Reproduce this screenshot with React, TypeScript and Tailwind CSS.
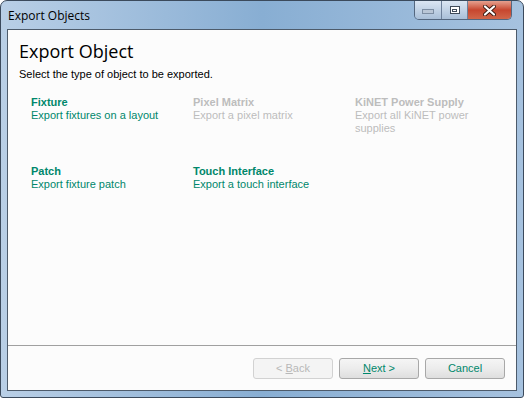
import React from 'react';

const ui = { fontFamily: '"Liberation Sans", Arial, sans-serif' };
const title = { fontFamily: '"Open Sans", "Noto Sans", sans-serif' };

type Item = { name: string; desc: string; enabled: boolean };

const items: Item[] = [
    { name: 'Fixture', desc: 'Export fixtures on a layout', enabled: true },
    { name: 'Pixel Matrix', desc: 'Export a pixel matrix', enabled: false },
    { name: 'KiNET Power Supply', desc: 'Export all KiNET power supplies', enabled: false },
    { name: 'Patch', desc: 'Export fixture patch', enabled: true },
    { name: 'Touch Interface', desc: 'Export a touch interface', enabled: true },
];

function ObjectLink({ item }: { item: Item }) {
    const color = item.enabled ? 'text-[#00876b]' : 'text-[#bdbdbd]';
    return (
        <div className={`text-[11px] leading-[13px] ${color}`}>
            <div className="font-bold">{item.name}</div>
            <div className="w-[130px]">{item.desc}</div>
        </div>
    );
}

function WizardButton({ children, disabled }: { children: React.ReactNode; disabled?: boolean }) {
    return (
        <button
            className={`h-[21px] w-[80px] rounded-[3px] border text-[11px] ${
                disabled
                    ? 'border-[#d2d2d2] bg-[#f4f4f4] text-[#b8b8b8]'
                    : 'border-[#a8a8a8] bg-gradient-to-b from-[#f5f5f5] via-[#ececec] to-[#dedede] text-[#00876b]'
            }`}
        >
            {children}
        </button>
    );
}

export default function App() {
    return (
        <div className="h-[398px] w-[524px] bg-white" style={ui}>
            <div className="flex h-full w-full flex-col rounded-t-[7px] rounded-b-[3px] border border-[#3b4a5c] bg-gradient-to-r from-[#b9cfe6] via-[#88aed3] to-[#a6c2df]">
                {/* title bar */}
                <div className="flex h-[28px] items-start">
                    <div className="pl-[7px] pt-[6px] text-[12px] text-black" style={title}>
                        Export Objects
                    </div>
                    <div className="ml-auto mr-[11px] flex h-[19px] overflow-hidden rounded-b-[5px] border border-t-0 border-[#54677f]">
                        <div className="flex w-[27px] items-center justify-center border-r border-[#6d809a] bg-gradient-to-b from-[#dbe6f3] to-[#a9bfd8]">
                            <div className="mt-[3px] h-[3px] w-[10px] bg-[#b9c6d6] ring-1 ring-[#7d8ea3]" />
                        </div>
                        <div className="flex w-[26px] items-center justify-center border-r border-[#6d809a] bg-gradient-to-b from-[#dbe6f3] to-[#a9bfd8]">
                            <div className="flex h-[8px] w-[10px] items-center justify-center border border-[#3f4b5a] bg-white">
                                <div className="h-[3px] w-[5px] border border-[#3f4b5a]" />
                            </div>
                        </div>
                        <div className="flex w-[43px] items-center justify-center bg-gradient-to-b from-[#e5a08f] via-[#c7462f] to-[#d1664a]">
                            <svg width="13" height="11" viewBox="0 0 13 11">
                                <path d="M2 1.5 L11 9.5 M11 1.5 L2 9.5" stroke="#3c1b14" strokeWidth="4" strokeLinecap="round" />
                                <path d="M2 1.5 L11 9.5 M11 1.5 L2 9.5" stroke="#ffffff" strokeWidth="2.2" strokeLinecap="round" />
                            </svg>
                        </div>
                    </div>
                </div>

                {/* client area */}
                <div className="mx-[6px] mb-[6px] flex flex-1 flex-col border border-[#4d5b6b] bg-[#fcfcfc]">
                    <div className="flex-1 pl-[11px] pt-[9px]">
                        <div className="text-[18px] leading-[24px] text-black" style={title}>
                            Export Object
                        </div>
                        <div className="mt-[5px] text-[11px] leading-[13px] text-black">
                            Select the type of object to be exported.
                        </div>
                        <div className="mt-[15px] grid grid-cols-[162px_162px_162px] gap-y-[30px] pl-[12px]">
                            {items.map((item) => (
                                <ObjectLink key={item.name} item={item} />
                            ))}
                        </div>
                    </div>
                    <div className="h-px bg-[#a0a0a0]" />
                    <div className="flex h-[44px] justify-end gap-[6px] pr-[11px] pt-[12px]">
                        <WizardButton disabled>
                            &lt; <span className="underline">B</span>ack
                        </WizardButton>
                        <WizardButton>
                            <span className="underline">N</span>ext &gt;
                        </WizardButton>
                        <WizardButton>Cancel</WizardButton>
                    </div>
                </div>
            </div>
        </div>
    );
}
